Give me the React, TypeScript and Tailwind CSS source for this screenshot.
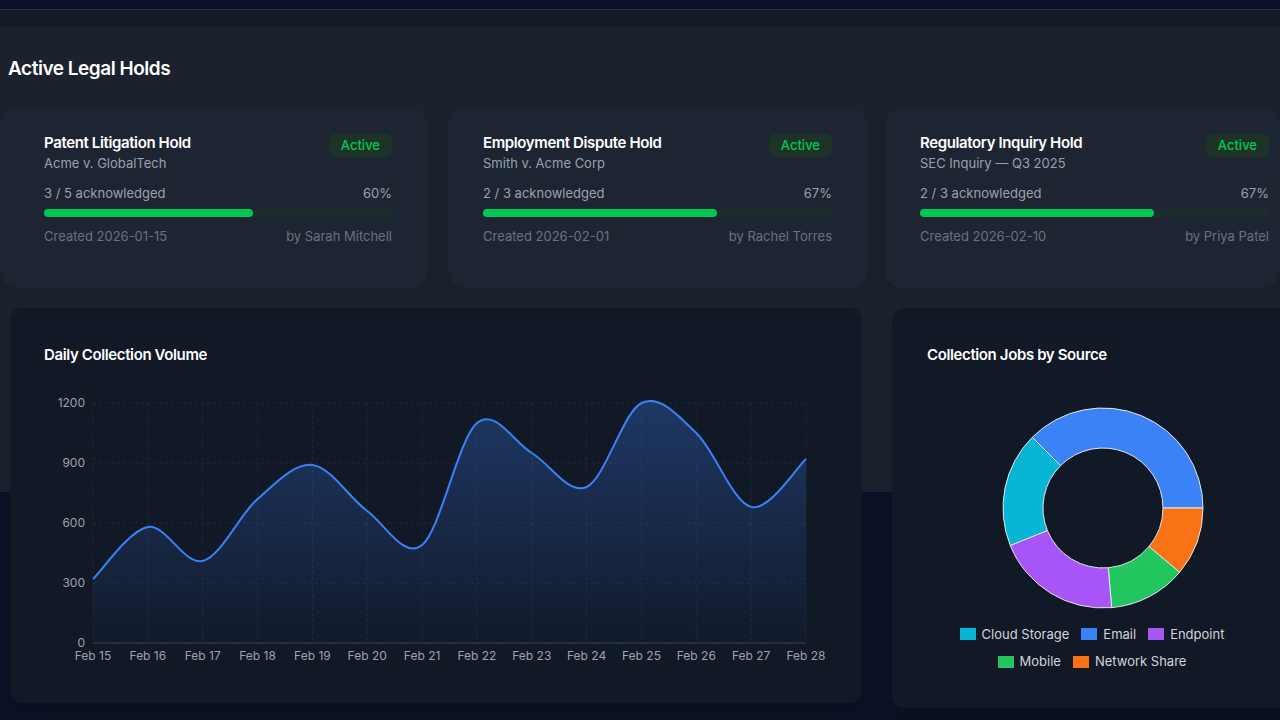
const holds = [
  { title: 'Patent Litigation Hold', sub: 'Acme v. GlobalTech', ack: '3 / 5 acknowledged', pct: 60, created: '2026-01-15', by: 'Sarah Mitchell', cls: 'w-[428px] pl-[44px] pr-[36px]' },
  { title: 'Employment Dispute Hold', sub: 'Smith v. Acme Corp', ack: '2 / 3 acknowledged', pct: 67, created: '2026-02-01', by: 'Rachel Torres', cls: 'ml-[20px] w-[420px] pl-[35px] pr-[36px]' },
  { title: 'Regulatory Inquiry Hold', sub: 'SEC Inquiry — Q3 2025', ack: '2 / 3 acknowledged', pct: 67, created: '2026-02-10', by: 'Priya Patel', cls: 'ml-[17px] w-[395px] pl-[35px] pr-[11px]' },
]

const days = ['Feb 15', 'Feb 16', 'Feb 17', 'Feb 18', 'Feb 19', 'Feb 20', 'Feb 21', 'Feb 22', 'Feb 23', 'Feb 24', 'Feb 25', 'Feb 26', 'Feb 27', 'Feb 28']
const values = [320, 580, 410, 720, 890, 660, 490, 1100, 950, 780, 1200, 1050, 680, 920]

const X0 = 73
const X1 = 786
const Y0 = 257
const Y1 = 17

function linePath() {
  const pts = values.map((v, i) => [X0 + ((X1 - X0) * i) / (values.length - 1), Y0 - ((Y0 - Y1) * v) / 1200])
  let d = `M${pts[0][0]},${pts[0][1]}`
  for (let i = 0; i < pts.length - 1; i++) {
    const p0 = pts[i - 1] || pts[i]
    const p1 = pts[i]
    const p2 = pts[i + 1]
    const p3 = pts[i + 2] || p2
    const c1 = [p1[0] + (p2[0] - p0[0]) / 6, p1[1] + (p2[1] - p0[1]) / 6]
    const c2 = [p2[0] - (p3[0] - p1[0]) / 6, p2[1] - (p3[1] - p1[1]) / 6]
    d += ` C${c1[0]},${c1[1]} ${c2[0]},${c2[1]} ${p2[0]},${p2[1]}`
  }
  return d
}

function LineChart() {
  const d = linePath()
  const ticks = [0, 300, 600, 900, 1200]
  return (
    <svg width="810" height="285" className="block">
      <defs>
        <linearGradient id="fill" x1="0" y1="0" x2="0" y2="1">
          <stop offset="0%" stopColor="#3b82f6" stopOpacity="0.3" />
          <stop offset="100%" stopColor="#3b82f6" stopOpacity="0.02" />
        </linearGradient>
      </defs>
      {ticks.map((t) => {
        const y = Y0 - ((Y0 - Y1) * t) / 1200
        return (
          <g key={t}>
            <line x1={X0} x2={X1} y1={y} y2={y} stroke="#1f2937" strokeDasharray="3 3" />
            <text x={X0 - 8} y={y + 4} textAnchor="end" fill="#9ca3af" fontSize="12">{t}</text>
          </g>
        )
      })}
      {days.map((day, i) => {
        const x = X0 + ((X1 - X0) * i) / (days.length - 1)
        return (
          <g key={day}>
            <line x1={x} x2={x} y1={Y1} y2={Y0} stroke="#1f2937" strokeDasharray="3 3" />
            <text x={x} y={Y0 + 17} textAnchor="middle" fill="#9ca3af" fontSize="12">{day}</text>
          </g>
        )
      })}
      <line x1={X0} x2={X1} y1={Y0} y2={Y0} stroke="#374151" />
      <path d={`${d} L${X1},${Y0} L${X0},${Y0} Z`} fill="url(#fill)" />
      <path d={d} fill="none" stroke="#3b82f6" strokeWidth="2" />
    </svg>
  )
}

const slices = [
  { from: 225, to: 360, color: '#3b82f6' },
  { from: 0, to: 40, color: '#f97316' },
  { from: 40, to: 85, color: '#22c55e' },
  { from: 85, to: 158, color: '#a855f7' },
  { from: 158, to: 225, color: '#06b6d4' },
]

function arc(from: number, to: number, r: number, R: number, cx: number, cy: number) {
  const p = (a: number, rad: number) => [cx + rad * Math.cos((a * Math.PI) / 180), cy + rad * Math.sin((a * Math.PI) / 180)]
  const [a, b] = p(from, R)
  const [c, e] = p(to, R)
  const [f, g] = p(to, r)
  const [h, k] = p(from, r)
  const large = to - from > 180 ? 1 : 0
  return `M${a},${b} A${R},${R} 0 ${large} 1 ${c},${e} L${f},${g} A${r},${r} 0 ${large} 0 ${h},${k} Z`
}

function Donut() {
  return (
    <svg width="210" height="210" className="block">
      {slices.map((s) => (
        <path key={s.color} d={arc(s.from, s.to, 60, 100, 105, 105)} fill={s.color} stroke="#e5e7eb" strokeWidth="1" />
      ))}
    </svg>
  )
}

function Legend({ color, label }: { color: string; label: string }) {
  return (
    <div className="flex items-center gap-1.5">
      <span className="h-3 w-4" style={{ backgroundColor: color }} />
      <span className="text-[13px] text-gray-300">{label}</span>
    </div>
  )
}

export default function App() {
  return (
    <div className="h-[720px] w-[1280px] overflow-hidden bg-[#0c1226] font-[Inter,sans-serif]">
      <div className="h-[10px] border-b border-[#2a3146] bg-[#0b1028]" />
      <div className="h-[17px] bg-[#161c27]" />
      <div className="h-[465px] bg-[#1b222e]">
        <h2 className="px-2 pt-[28px] text-[19px] font-semibold tracking-tight text-white">Active Legal Holds</h2>
        <div className="mt-[24px] flex overflow-hidden">
          {holds.map((h) => (
            <div key={h.title} className={`h-[180px] shrink-0 rounded-2xl bg-[#1e2532] py-[24px] shadow-lg ${h.cls}`}>
              <div className="flex items-start justify-between">
                <div>
                  <div className="text-[15px] font-semibold tracking-tight text-white">{h.title}</div>
                  <div className="text-[13px] text-gray-400">{h.sub}</div>
                </div>
                <span className="mt-[2px] rounded-md bg-[#1d3328] px-3 py-0.5 text-[13px] font-medium text-green-500">Active</span>
              </div>
              <div className="mt-[10px] flex justify-between text-[13px] text-gray-400">
                <span>{h.ack}</span>
                <span>{h.pct}%</span>
              </div>
              <div className="mt-1.5 h-2 rounded-full bg-[#1c2d2a]">
                <div className="h-2 rounded-full bg-green-500" style={{ width: `${h.pct}%` }} />
              </div>
              <div className="mt-[10px] flex justify-between text-[13px] text-gray-500">
                <span>Created {h.created}</span>
                <span>by {h.by}</span>
              </div>
            </div>
          ))}
        </div>
      </div>
      <div className="-mt-[184px] flex gap-[30px] pl-[10px]">
        <div className="h-[395px] w-[852px] shrink-0 rounded-xl bg-[#111826] px-[34px] pt-[36px] shadow-xl">
          <div className="text-[15px] font-semibold tracking-tight text-white">Daily Collection Volume</div>
          <div className="-ml-[24px] mt-[19px]">
            <LineChart />
          </div>
        </div>
        <div className="h-[400px] w-[400px] shrink-0 rounded-xl bg-[#111826] px-[35px] pt-[36px] shadow-xl">
          <div className="text-[15px] font-semibold tracking-tight text-white">Collection Jobs by Source</div>
          <div className="ml-[71px] mt-[36px]">
            <Donut />
          </div>
          <div className="mt-[12px] flex w-[330px] flex-wrap justify-center gap-x-3 gap-y-2">
            <Legend color="#06b6d4" label="Cloud Storage" />
            <Legend color="#3b82f6" label="Email" />
            <Legend color="#a855f7" label="Endpoint" />
            <Legend color="#22c55e" label="Mobile" />
            <Legend color="#f97316" label="Network Share" />
          </div>
        </div>
      </div>
    </div>
  )
}
